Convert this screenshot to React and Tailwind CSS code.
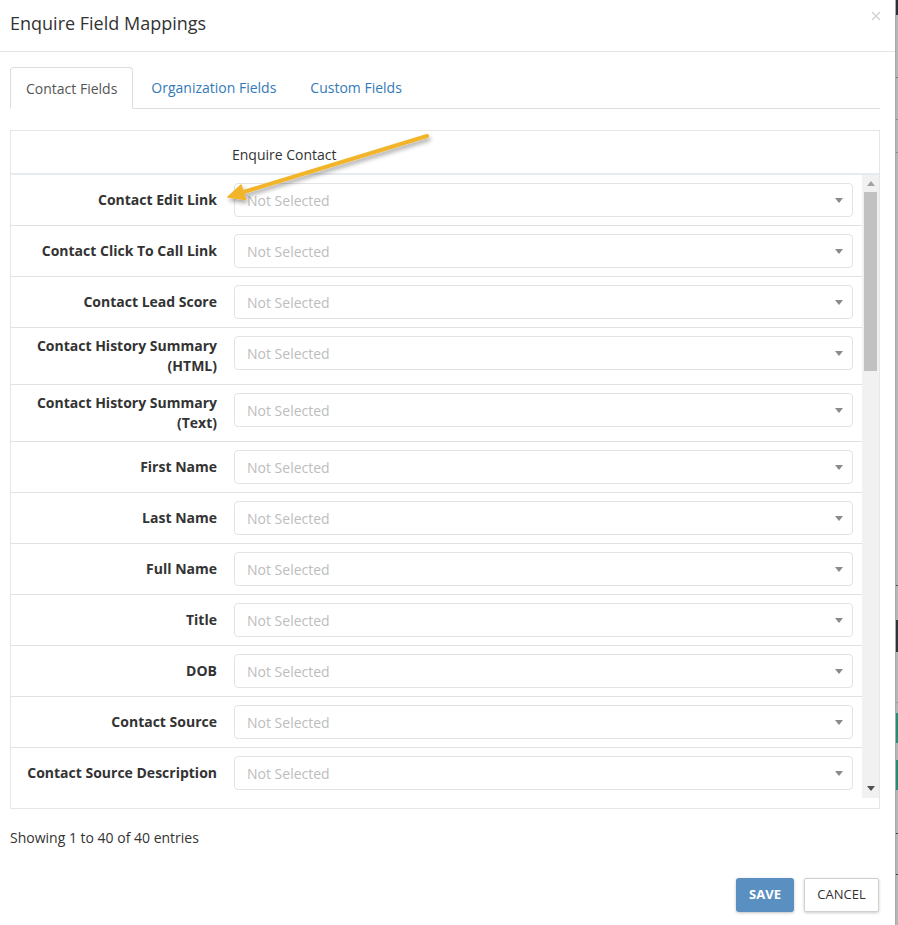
import React from "react";

const rows = [
  ["Contact Edit Link"],
  ["Contact Click To Call Link"],
  ["Contact Lead Score"],
  ["Contact History Summary", "(HTML)"],
  ["Contact History Summary", "(Text)"],
  ["First Name"],
  ["Last Name"],
  ["Full Name"],
  ["Title"],
  ["DOB"],
  ["Contact Source"],
  ["Contact Source Description"],
];

function Caret({ className = "" }) {
  return (
    <svg width="8" height="5" viewBox="0 0 8 5" className={className}>
      <polygon points="0,0 8,0 4,5" fill="currentColor" />
    </svg>
  );
}

function Row({ label }) {
  return (
    <div className="flex shrink-0 border-b border-[#e2e2e2]">
      <div className="w-[214px] shrink-0 pl-[8px] pr-[8px] py-[8px] flex items-center justify-end text-right text-[14px] leading-[20px] font-bold text-[#333]">
        <span>
          {label[0]}
          {label[1] && <br />}
          {label[1]}
        </span>
      </div>
      <div className="flex-1 px-[9px] py-[8px] flex items-start">
        <div className="w-full h-[34px] border border-[#e3e3e3] rounded-[4px] bg-white flex items-center justify-between pl-[12px] pr-[9px]">
          <span className="text-[14px] text-[#bdbdbd]">Not Selected</span>
          <Caret className="text-[#8a8a8a]" />
        </div>
      </div>
    </div>
  );
}

function Arrow() {
  return (
    <svg
      className="absolute left-0 top-0 pointer-events-none"
      width="898"
      height="925"
      viewBox="0 0 898 925"
    >
      <defs>
        <filter id="sh" x="-10%" y="-30%" width="130%" height="180%">
          <feDropShadow dx="1.5" dy="3" stdDeviation="2" floodColor="#000" floodOpacity="0.35" />
        </filter>
      </defs>
      <g filter="url(#sh)">
        <line x1="427" y1="136" x2="242" y2="192.5" stroke="#f2b52c" strokeWidth="4" strokeLinecap="round" />
        <polygon points="228,197 241,185 245.5,199.5" fill="#f2b52c" stroke="#f2b52c" strokeWidth="1.5" strokeLinejoin="round" />
      </g>
    </svg>
  );
}

export default function App() {
  return (
    <div className="relative w-[898px] h-[925px] overflow-hidden bg-white flex font-['Open_Sans',sans-serif]">
      <div className="w-[895px] shrink-0 flex flex-col bg-white">
        {/* header */}
        <div className="h-[52px] border-b border-[#e5e5e5] pl-[10px] pr-[14px] flex items-start justify-between">
          <h4 className="pt-[10px] text-[18px] leading-[26px] text-[#333]">Enquire Field Mappings</h4>
          <svg width="10" height="10" viewBox="0 0 10 10" className="mt-[11px]">
            <path d="M1 1 L9 9 M9 1 L1 9" stroke="#cfcfcf" strokeWidth="1.2" />
          </svg>
        </div>

        <div className="pl-[10px] pr-[15px] pt-[15px] flex flex-col">
          {/* tabs */}
          <div className="flex h-[42px] border-b border-[#dddddd]">
            <div className="h-[42px] px-[15px] flex items-center border border-[#dddddd] border-b-white rounded-t-[4px] bg-white text-[14px] text-[#555] -mb-px">
              Contact Fields
            </div>
            <div className="ml-[3px] px-[15px] flex items-center text-[14px] text-[#337ab7]">Organization Fields</div>
            <div className="ml-[4px] px-[15px] flex items-center text-[14px] text-[#337ab7]">Custom Fields</div>
          </div>

          {/* table */}
          <div className="mt-[21px] border border-[#e6e6e6] flex flex-col">
            <div className="h-[44px] flex items-end border-b-2 border-[#e6ebef]">
              <div className="w-[214px] shrink-0" />
              <div className="pl-[7px] pb-[8px] text-[14px] leading-[20px] text-[#333]">Enquire Contact</div>
            </div>
            <div className="h-[623px] flex overflow-hidden">
              <div className="flex-1 flex flex-col">
                {rows.map((r, i) => (
                  <Row key={i} label={r} />
                ))}
              </div>
              {/* scrollbar */}
              <div className="w-[17px] shrink-0 bg-[#f1f1f1] flex flex-col items-center">
                <div className="h-[17px] flex items-center justify-center">
                  <Caret className="text-[#a3a3a3] rotate-180" />
                </div>
                <div className="w-[13px] h-[179px] bg-[#c1c1c1]" />
                <div className="flex-1" />
                <div className="h-[19px] flex items-center justify-center">
                  <Caret className="text-[#505050]" />
                </div>
              </div>
            </div>
            <div className="h-[10px]" />
          </div>

          <div className="mt-[19px] text-[14px] leading-[20px] text-[#333]">Showing 1 to 40 of 40 entries</div>

          <div className="mt-[30px] flex justify-end gap-[10px] pr-[1px]">
            <button className="h-[34px] w-[58px] rounded-[3px] bg-[#5a8fc1] text-white text-[13px] font-bold shadow-[0_1px_3px_rgba(0,0,0,0.25)]">
              SAVE
            </button>
            <button className="h-[34px] w-[75px] rounded-[2px] bg-white border border-[#d0d0d0] text-[#333] text-[13px] shadow-[0_1px_3px_rgba(0,0,0,0.2)]">
              CANCEL
            </button>
          </div>
        </div>
      </div>

      {/* background page strip */}
      <div className="w-[3px] shrink-0 flex flex-col bg-[#b6b6b6] border-l border-[#a9a9a9]">
        <div className="h-[15px] bg-[#2b3038]" />
        <div className="h-[62px]" />
        <div className="h-px bg-[#7e7e7e]" />
        <div className="h-[41px]" />
        <div className="h-px bg-[#8a8a8a]" />
        <div className="h-[32px]" />
        <div className="h-px bg-[#8a8a8a]" />
        <div className="h-[432px]" />
        <div className="h-px bg-[#4a4f57]" />
        <div className="h-[34px]" />
        <div className="h-[32px] bg-[#2c333b]" />
        <div className="h-[50px]" />
        <div className="h-px bg-[#9a9a9a]" />
        <div className="h-[10px]" />
        <div className="h-[30px] bg-[#1f8f76]" />
        <div className="h-[17px]" />
        <div className="h-[30px] bg-[#1f8f76]" />
        <div className="h-[43px]" />
        <div className="h-px bg-[#3e434a]" />
        <div className="h-[40px]" />
        <div className="h-px bg-[#3e434a]" />
      </div>

      <Arrow />
    </div>
  );
}
